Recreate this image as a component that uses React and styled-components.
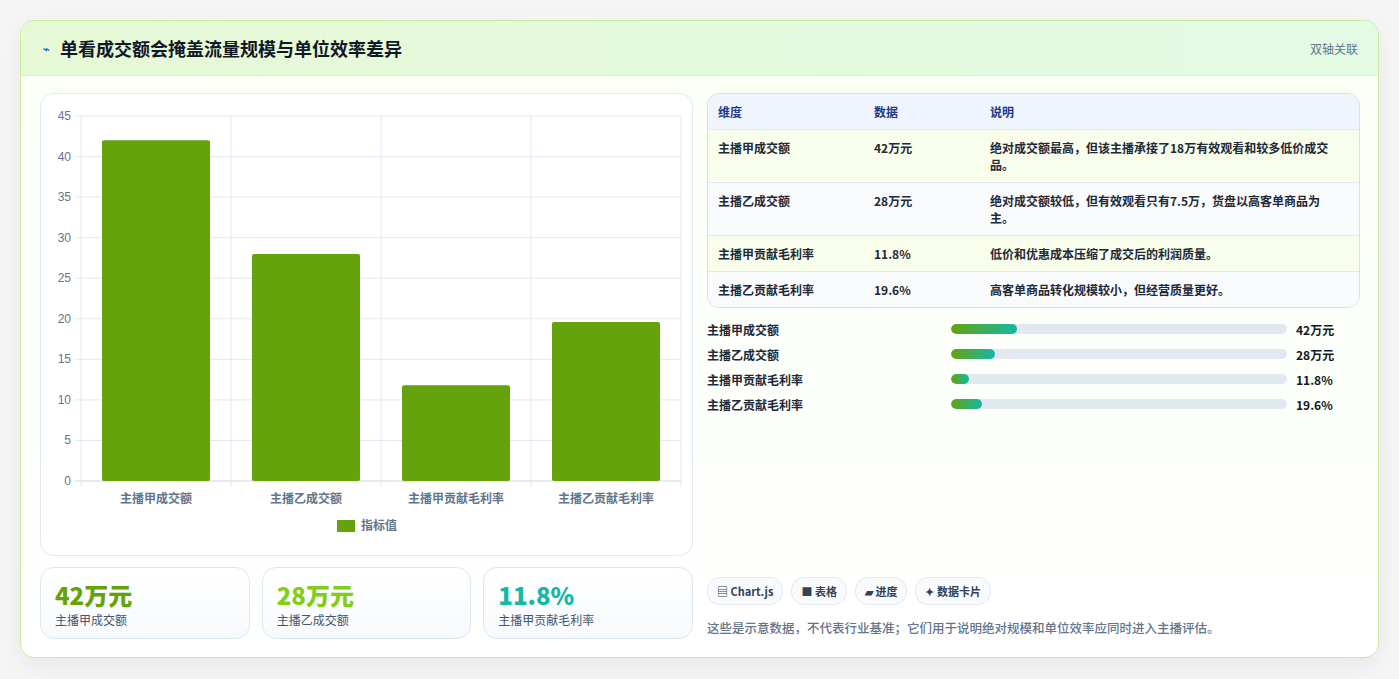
import React from 'react';
import styled, { createGlobalStyle } from 'styled-components';

const Global = createGlobalStyle`
  body { margin: 0; background: #f4f5f4; font-family: "Noto Sans CJK SC", "Noto Sans", sans-serif; }
`;

const Page = styled.div`
  padding: 20px 20px 22px 20px;
`;

const Card = styled.div`
  border: 1px solid #c8eb9d;
  border-radius: 14px;
  background: linear-gradient(180deg, #fbfff5 0%, #ffffff 100%);
  box-shadow: 0 8px 24px rgba(0,0,0,0.06);
  overflow: hidden;
`;

const Header = styled.div`
  height: 54px;
  display: flex;
  align-items: center;
  justify-content: space-between;
  padding: 0 20px 0 22px;
  background: linear-gradient(90deg, #e6f9d6 0%, #e3fbe4 100%);
  border-bottom: 1px solid #d9efcc;
`;

const Title = styled.h1`
  margin: 0;
  font-size: 18px;
  font-weight: 700;
  color: #111827;
  display: flex;
  align-items: center;
  gap: 10px;
`;

const Bolt = styled.span`
  color: #2563eb;
  font-size: 11px;
`;

const HeaderNote = styled.span`
  font-size: 12px;
  color: #64748b;
`;

const Body = styled.div`
  display: grid;
  grid-template-columns: 653px 653px;
  gap: 14px;
  padding: 17px 18px 18px 19px;
`;

const Left = styled.div`
  display: flex;
  flex-direction: column;
  gap: 11px;
`;

const ChartBox = styled.div`
  height: 461px;
  border: 1px solid #e2e8f0;
  border-radius: 14px;
  background: #fff;
  overflow: hidden;
`;

const Stats = styled.div`
  display: grid;
  grid-template-columns: repeat(3, 1fr);
  gap: 12px;
`;

const Stat = styled.div`
  height: 72px;
  box-sizing: border-box;
  border: 1px solid #dbe7f3;
  border-radius: 14px;
  background: linear-gradient(180deg, #ffffff, #f7fafd);
  padding: 11px 14px;
`;

const StatValue = styled.div`
  font-size: 24px;
  font-weight: 800;
  line-height: 32px;
  color: ${p => p.$color};
`;

const StatLabel = styled.div`
  font-size: 12px;
  color: #475569;
`;

const Right = styled.div`
  display: flex;
  flex-direction: column;
`;

const Table = styled.div`
  border: 1px solid #d6e0ea;
  border-radius: 12px;
  overflow: hidden;
  font-size: 12px;
  font-weight: 600;
  color: #1f2937;
`;

const Row = styled.div`
  display: grid;
  grid-template-columns: 156px 116px 1fr;
  padding: ${p => p.$head ? '9px 10px' : '9px 10px'};
  min-height: ${p => p.$h || 35}px;
  box-sizing: border-box;
  line-height: 17px;
  background: ${p => p.$head ? '#eef5fd' : p.$alt ? '#f8fafc' : '#f8fdec'};
  color: ${p => p.$head ? '#1e3a8a' : '#1f2937'};
  border-top: ${p => p.$head ? 'none' : '1px solid #e2e8f0'};
  & > span:last-child { padding-right: 20px; }
`;

const Bars = styled.div`
  display: flex;
  flex-direction: column;
  gap: 7px;
  margin-top: 12px;
`;

const BarRow = styled.div`
  display: grid;
  grid-template-columns: 244px 336px 1fr;
  gap: 0;
  align-items: center;
  font-size: 12px;
  font-weight: 600;
  color: #1f2937;
  height: 18px;
`;

const Track = styled.div`
  height: 10px;
  border-radius: 5px;
  background: #e2e8f0;
  overflow: hidden;
`;

const Fill = styled.div`
  height: 100%;
  border-radius: 5px;
  background: linear-gradient(90deg, #65a30d, #14b8a6);
`;

const Value = styled.span`
  padding-left: 9px;
  font-weight: 700;
  color: #111827;
`;

const Spacer = styled.div`
  flex: 1;
`;

const Tags = styled.div`
  display: flex;
  gap: 8px;
  margin-bottom: 13px;
`;

const Tag = styled.span`
  height: 26px;
  padding: 0 9px;
  display: inline-flex;
  align-items: center;
  gap: 4px;
  border: 1px solid #e2e8f0;
  border-radius: 13px;
  background: #f8fafc;
  font-size: 11px;
  font-weight: 600;
  color: #334155;
`;

const Foot = styled.p`
  margin: 0 0 2px 0;
  font-size: 12.5px;
  color: #64748b;
  font-weight: 500;
`;

const rows = [
  ['主播甲成交额', '42万元', '绝对成交额最高，但该主播承接了18万有效观看和较多低价成交品。', 52],
  ['主播乙成交额', '28万元', '绝对成交额较低，但有效观看只有7.5万，货盘以高客单商品为主。', 35],
  ['主播甲贡献毛利率', '11.8%', '低价和优惠成本压缩了成交后的利润质量。', 35],
  ['主播乙贡献毛利率', '19.6%', '高客单商品转化规模较小，但经营质量更好。', 36],
];

const bars = [
  ['主播甲成交额', 19.6, '42万元'],
  ['主播乙成交额', 13.1, '28万元'],
  ['主播甲贡献毛利率', 5.3, '11.8%'],
  ['主播乙贡献毛利率', 9.2, '19.6%'],
];

const chartVals = [42, 28, 11.8, 19.6];
const cats = ['主播甲成交额', '主播乙成交额', '主播甲贡献毛利率', '主播乙贡献毛利率'];

function Chart() {
  const x0 = 40, x1 = 640, yTop = 22, yBot = 387;
  const y = v => yBot - (v / 45) * (yBot - yTop);
  const band = (x1 - x0) / 4;
  return (
    <svg width="652" height="461">
      {[0, 5, 10, 15, 20, 25, 30, 35, 40, 45].map(t => (
        <g key={t}>
          <line x1={x0 - 6} x2={x1} y1={y(t)} y2={y(t)} stroke={t === 0 ? '#cbd5e1' : '#e2e8f0'} />
          <text x={x0 - 10} y={y(t) + 4} textAnchor="end" fontSize="12" fill="#64748b" fontFamily="Liberation Sans, sans-serif">{t}</text>
        </g>
      ))}
      {[0, 1, 2, 3, 4].map(i => (
        <line key={i} x1={x0 + i * band} x2={x0 + i * band} y1={yTop} y2={yBot + 6} stroke="#e2e8f0" />
      ))}
      {chartVals.map((v, i) => (
        <rect key={i} x={x0 + i * band + 21} y={y(v)} width={108} height={yBot - y(v)} rx="2" fill="#65a30d" />
      ))}
      {cats.map((c, i) => (
        <text key={c} x={x0 + i * band + band / 2} y={409} textAnchor="middle" fontSize="12" fontWeight="600" fill="#64748b">{c}</text>
      ))}
      <rect x="296" y="426" width="18" height="12" fill="#65a30d" />
      <text x="320" y="436" fontSize="12" fontWeight="600" fill="#64748b">指标值</text>
    </svg>
  );
}

export default function App() {
  return (
    <Page>
      <Global />
      <Card>
        <Header>
          <Title><Bolt>⌁</Bolt>单看成交额会掩盖流量规模与单位效率差异</Title>
          <HeaderNote>双轴关联</HeaderNote>
        </Header>
        <Body>
          <Left>
            <ChartBox><Chart /></ChartBox>
            <Stats>
              <Stat><StatValue $color="#65a30d">42万元</StatValue><StatLabel>主播甲成交额</StatLabel></Stat>
              <Stat><StatValue $color="#84cc16">28万元</StatValue><StatLabel>主播乙成交额</StatLabel></Stat>
              <Stat><StatValue $color="#14b8a6">11.8%</StatValue><StatLabel>主播甲贡献毛利率</StatLabel></Stat>
            </Stats>
          </Left>
          <Right>
            <Table>
              <Row $head $h={33}><span>维度</span><span>数据</span><span>说明</span></Row>
              {rows.map((r, i) => (
                <Row key={r[0]} $alt={i % 2 === 1} $h={r[3]}><span>{r[0]}</span><span>{r[1]}</span><span>{r[2]}</span></Row>
              ))}
            </Table>
            <Bars>
              {bars.map(b => (
                <BarRow key={b[0]}>
                  <span>{b[0]}</span>
                  <Track><Fill style={{ width: `${b[1]}%` }} /></Track>
                  <Value>{b[2]}</Value>
                </BarRow>
              ))}
            </Bars>
            <Spacer />
            <Tags>
              <Tag>▤ Chart.js</Tag>
              <Tag>■ 表格</Tag>
              <Tag>▰ 进度</Tag>
              <Tag>✦ 数据卡片</Tag>
            </Tags>
            <Foot>这些是示意数据，不代表行业基准；它们用于说明绝对规模和单位效率应同时进入主播评估。</Foot>
          </Right>
        </Body>
      </Card>
    </Page>
  );
}
